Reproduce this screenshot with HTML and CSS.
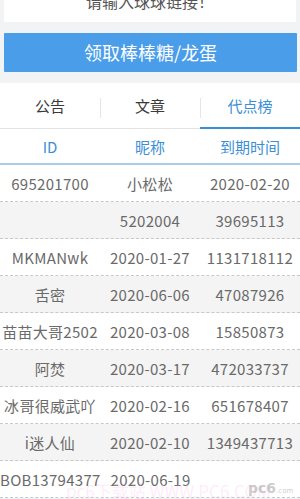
FILE: index.html
```html
<!DOCTYPE html>
<html lang="zh">
<head>
<meta charset="utf-8">
<link rel="stylesheet" href="styles.css">
</head>
<body>
<div class="page">
  <div class="card"><p>请输入球球链接！</p></div>
  <div class="btn">领取棒棒糖/龙蛋</div>
  <div class="panel">
    <div class="tabs">
      <div class="tab">公告</div>
      <div class="tab sep">文章</div>
      <div class="tab sep active">代点榜</div>
    </div>
    <div class="row head">
      <div>ID</div><div>昵称</div><div>到期时间</div>
    </div>
    <div class="row"><div>695201700</div><div>小松松</div><div>2020-02-20</div></div>
    <div class="row alt"><div></div><div>5202004</div><div>39695113</div></div>
    <div class="row"><div>MKMANwk</div><div>2020-01-27</div><div>1131718112</div></div>
    <div class="row alt"><div>舌密</div><div>2020-06-06</div><div>47087926</div></div>
    <div class="row"><div>苗苗大哥2502</div><div>2020-03-08</div><div>15850873</div></div>
    <div class="row alt"><div>阿焚</div><div>2020-03-17</div><div>472033737</div></div>
    <div class="row"><div>冰哥很威武吖</div><div>2020-02-16</div><div>651678407</div></div>
    <div class="row alt"><div>i迷人仙</div><div>2020-02-10</div><div>1349437713</div></div>
    <div class="row"><div>BOB13794377</div><div>2020-06-19</div><div></div></div>
  </div>
  <div class="wm">pc6下载站 WWW.PC6.COM</div>
  <div class="logo">pc6<small>.com</small></div>
</div>
</body>
</html>
```
FILE: styles.css
```css
html, body {
  margin: 0;
  padding: 0;
  background: #f1f3f5;
  font-family: "Noto Sans CJK SC", "Noto Sans", sans-serif;
}
.page {
  position: relative;
  height: 499px;
  overflow: hidden;
}
.card {
  margin: 0 4px;
  height: 22px;
  background: #fff;
  overflow: hidden;
  text-align: center;
}
.card p {
  margin: -9px 0 0;
  font-size: 16px;
  line-height: 20px;
  color: #555;
}
.btn {
  margin: 11px 3px 0 4px;
  height: 39px;
  background: #4a9de9;
  color: #fff;
  font-size: 18px;
  line-height: 39px;
  text-align: center;
  border-radius: 1px;
}
.panel {
  margin-top: 11px;
  background: #fff;
}
.tabs {
  display: grid;
  grid-template-columns: 1fr 1fr 1fr;
  height: 45px;
  border-bottom: 1px solid #e3e3e3;
}
.tab {
  position: relative;
  display: flex;
  align-items: center;
  justify-content: center;
  font-size: 15px;
  color: #3a3a3a;
}
.tab.sep::before {
  content: "";
  position: absolute;
  left: 0;
  top: 15px;
  height: 20px;
  width: 1px;
  background: #e6e6e6;
}
.tab.active {
  color: #3b8fd6;
  border-bottom: 2px solid #3b8fd6;
  margin-bottom: -1px;
}
.row {
  display: grid;
  grid-template-columns: 1fr 1fr 1fr;
  height: 36px;
  border-bottom: 1px dashed #c8c8c8;
  font-size: 15px;
  letter-spacing: 0.3px;
  color: #6a6a6a;
  align-items: center;
  text-align: center;
  white-space: nowrap;
}
.row.head {
  height: 34px;
  border-bottom: 2px solid #a9cde8;
  color: #3b8fd6;
  letter-spacing: 0;
}
.row.alt {
  background: #f4f4f4;
}
.wm {
  position: absolute;
  left: 66px;
  top: 478px;
  font-size: 17px;
  color: rgba(255, 190, 235, 0.3);
  white-space: nowrap;
  pointer-events: none;
}
.logo {
  position: absolute;
  left: 248px;
  top: 480px;
  font-size: 14px;
  font-weight: bold;
  color: rgba(160, 160, 160, 0.55);
  font-family: "DejaVu Sans", sans-serif;
}
.logo small {
  font-size: 7px;
  font-weight: normal;
}
```
